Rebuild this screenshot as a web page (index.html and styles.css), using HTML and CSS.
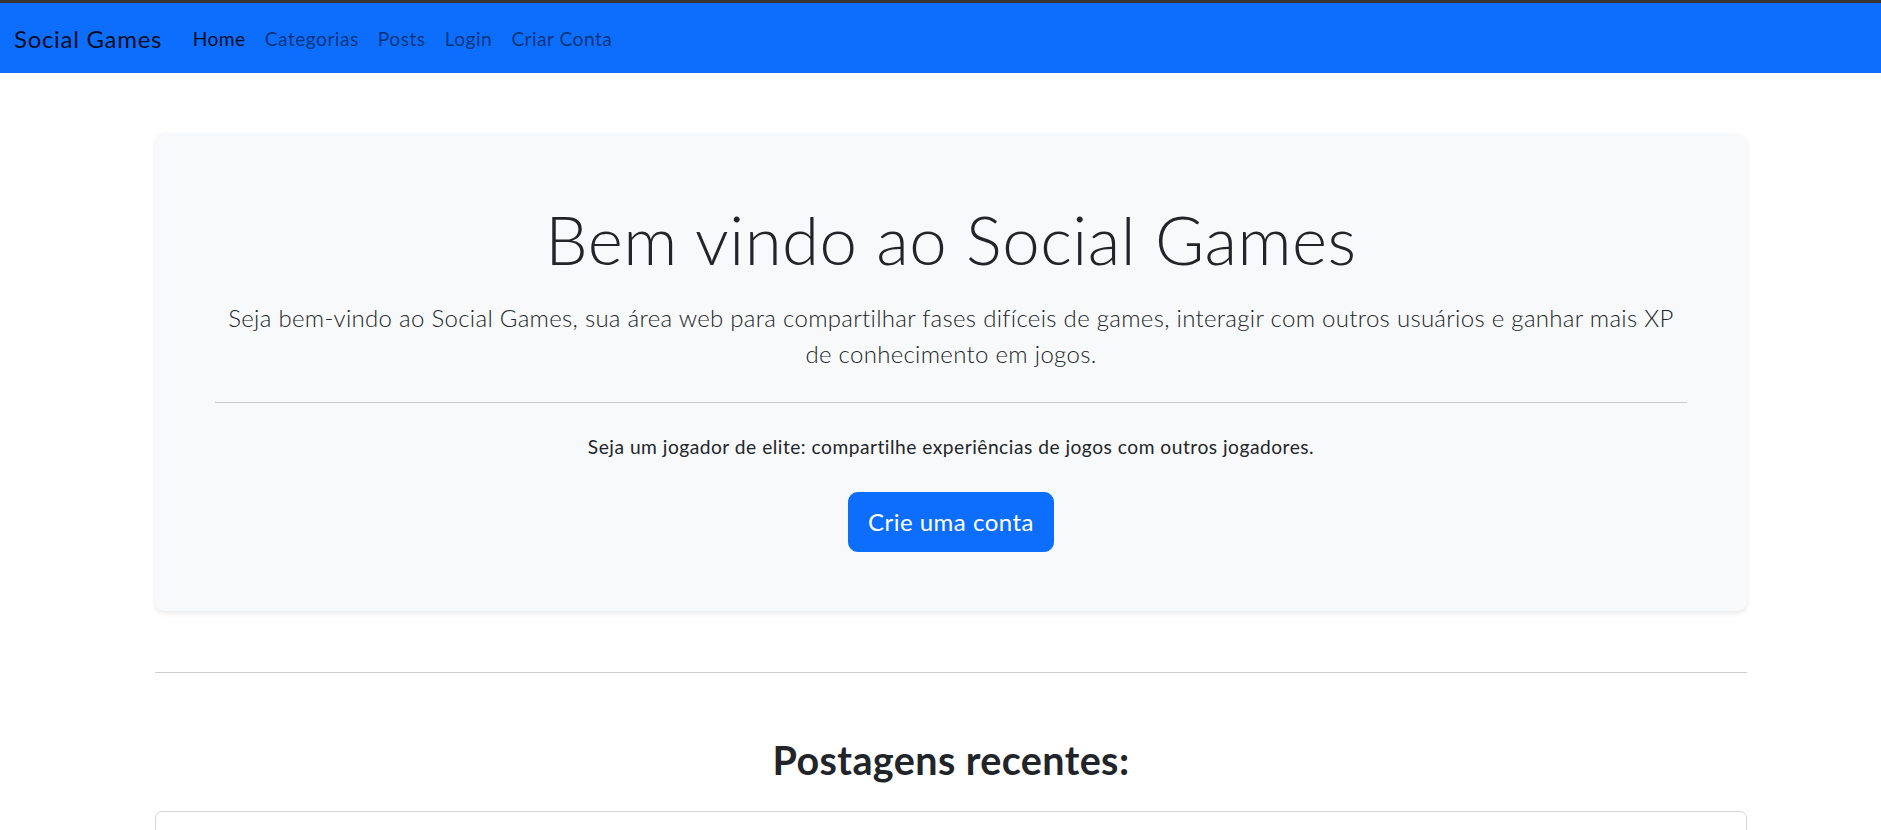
FILE: index.html
```html
<!DOCTYPE html>
<html lang="pt-BR">
<head>
<meta charset="utf-8">
<title>Social Games</title>
<link rel="stylesheet" href="styles.css">
</head>
<body>
<div class="topline"></div>
<nav class="navbar">
  <a class="brand" href="#">Social Games</a>
  <ul class="nav">
    <li><a class="nav-link active" href="#">Home</a></li>
    <li><a class="nav-link" href="#">Categorias</a></li>
    <li><a class="nav-link" href="#">Posts</a></li>
    <li><a class="nav-link" href="#">Login</a></li>
    <li><a class="nav-link" href="#">Criar Conta</a></li>
  </ul>
</nav>
<main class="container">
  <section class="hero">
    <h1 class="hero-title">Bem vindo ao Social Games</h1>
    <p class="lead">Seja bem-vindo ao Social Games, sua área web para compartilhar fases difíceis de games, interagir com outros usuários e ganhar mais XP de conhecimento em jogos.</p>
    <hr class="hero-rule">
    <p class="hero-text">Seja um jogador de elite: compartilhe experiências de jogos com outros jogadores.</p>
    <a class="btn" href="#">Crie uma conta</a>
  </section>
  <hr class="page-rule">
  <h2 class="section-title">Postagens recentes:</h2>
  <div class="post-card"></div>
</main>
</body>
</html>
```
FILE: styles.css
```css
* { box-sizing: border-box; }
html, body { margin: 0; padding: 0; }
body {
  font-family: "Lato", "Open Sans", sans-serif;
  font-size: 19.2px;
  color: #212529;
  background: #fff;
  overflow: hidden;
}
.topline { height: 3px; background: #3a3535; }
.navbar {
  height: 70px;
  background: #0d6efd;
  display: flex;
  align-items: center;
  padding-left: 14px;
}
.brand {
  font-size: 24px;
  letter-spacing: 0.7px;
  color: rgba(0,0,0,.9);
  text-decoration: none;
  margin-right: 21px;
}
.nav { list-style: none; margin: 0; padding: 0; display: flex; }
.nav-link {
  display: block;
  padding: 0 9.6px;
  font-size: 19.2px;
  letter-spacing: 0.45px;
  color: rgba(0,0,0,.55);
  text-decoration: none;
}
.nav-link.active { color: rgba(0,0,0,.9); }
.container {
  width: 1592px;
  margin: 0 0 0 155px;
  padding-top: 60px;
}
.hero {
  background: #f8f9fa;
  border-radius: 10px;
  box-shadow: 0 2.4px 4.8px rgba(0,0,0,.08);
  padding: 66px 60px 59px;
  text-align: center;
}
.hero-title {
  margin: 0 0 20px;
  font-size: 67.2px;
  font-weight: 300;
  letter-spacing: 0.5px;
  line-height: 1.2;
}
.lead {
  margin: 0;
  font-size: 24px;
  font-weight: 300;
  letter-spacing: 0.3px;
  line-height: 36px;
}
.hero-rule {
  margin: 30px 0 30px;
  border: 0;
  border-top: 1px solid #c9cacc;
}
.hero-text {
  margin: 0 0 31px;
  line-height: 28.8px;
  letter-spacing: 0.5px;
}
.btn {
  display: inline-block;
  background: #0d6efd;
  color: #fff;
  font-size: 24px;
  line-height: 36px;
  letter-spacing: 0.5px;
  padding: 11px 19px;
  border: 1px solid #0d6efd;
  border-radius: 9.6px;
  text-decoration: none;
}
.page-rule {
  margin: 61px 0 0;
  border: 0;
  border-top: 1px solid #cdcdcd;
}
.section-title {
  margin: 63px 0 27px;
  text-align: center;
  font-size: 39.5px;
  font-weight: 700;
  letter-spacing: 0.4px;
  line-height: 1.2;
}
.post-card {
  height: 200px;
  border: 1px solid #d6d6d6;
  border-radius: 7px;
}
```
